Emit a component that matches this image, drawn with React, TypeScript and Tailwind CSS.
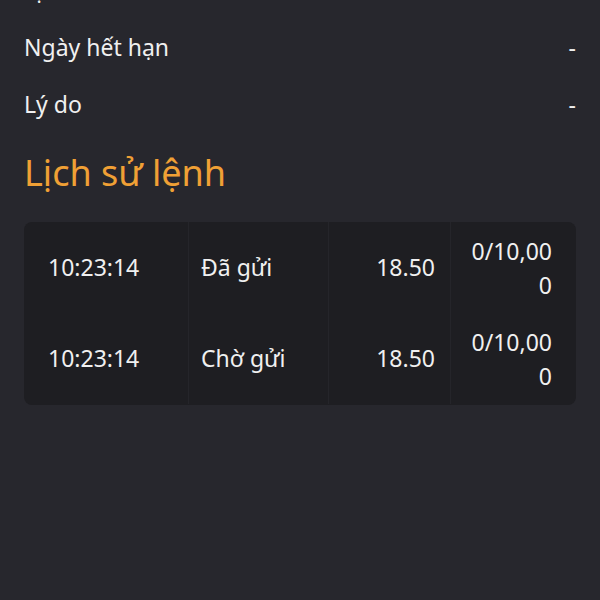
import React from "react";

const rows = [
  { time: "10:23:14", status: "Đã gửi", price: "18.50", qty: "0/10,000" },
  { time: "10:23:14", status: "Chờ gửi", price: "18.50", qty: "0/10,000" },
];

export default function App() {
  return (
    <div
      className="min-h-screen w-full bg-[#27272d] px-6 text-[#f0f0f0] overflow-hidden"
      style={{ fontFamily: '"Noto Sans", "Open Sans", sans-serif' }}
    >
      <div className="-mt-[38px] flex h-[57px] items-center justify-between text-[23px]">
        <span>Lịch</span>
      </div>
      <div className="flex h-[57px] items-center justify-between text-[23px]">
        <span>Ngày hết hạn</span>
        <span>-</span>
      </div>
      <div className="flex h-[57px] items-center justify-between text-[23px]">
        <span>Lý do</span>
        <span>-</span>
      </div>
      <h2 className="mt-4 h-[47px] text-[36px] leading-[47px] text-[#f0a035]">Lịch sử lệnh</h2>
      <div className="mt-[26px] overflow-hidden rounded-lg bg-[#1e1e22] pb-px text-[23px]">
        {rows.map((r, i) => (
          <div key={i} className="grid grid-cols-[164px_140px_122px_1fr]">
            <div className="flex h-[91px] items-center pl-6">{r.time}</div>
            <div className="flex h-[91px] items-center border-l border-[#25252a] pl-3">{r.status}</div>
            <div className="flex h-[91px] items-center justify-end border-l border-[#25252a] pr-[15px]">{r.price}</div>
            <div className="flex h-[91px] items-center justify-end border-l border-[#25252a] pr-6">
              <span className="w-[88px] break-all text-right leading-[34px]">{r.qty}</span>
            </div>
          </div>
        ))}
      </div>
    </div>
  );
}
